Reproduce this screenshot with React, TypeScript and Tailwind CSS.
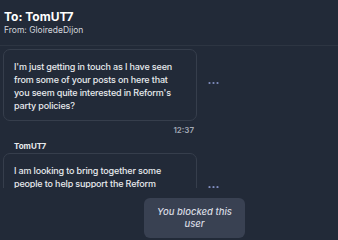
import * as React from "react"

const Dots = () => (
  <svg width="12" height="4" viewBox="0 0 12 4" className="shrink-0">
    <circle cx="1.5" cy="2" r="1.1" fill="#7f8dbf" />
    <circle cx="5.5" cy="2" r="1.1" fill="#7f8dbf" />
    <circle cx="9.5" cy="2" r="1.1" fill="#7f8dbf" />
  </svg>
)

type BubbleProps = {
  text: string
}

function Bubble({ text }: BubbleProps) {
  return (
    <div className="flex items-center">
      <div className="w-[194px] shrink-0 rounded-[7px] border border-[#363e4c] pt-[10px] pr-[18px] pb-[8px] pl-[10px] text-[9px] leading-[13px] font-medium tracking-[-0.15px] text-[#e8eaee]">
        {text}
      </div>
      <div className="mb-[4px] ml-[11px] flex">
        <Dots />
      </div>
    </div>
  )
}

export default function App() {
  return (
    <div className="flex h-[240px] w-[338px] flex-col overflow-hidden bg-[#222a38] font-['Inter','Noto_Sans',sans-serif]">
      <header className="h-[46px] shrink-0 border-b border-[#2d3542] px-[4px] pt-[9px]">
        <div className="text-[12px] leading-[15px] font-bold text-white">
          To: TomUT7
        </div>
        <div className="mt-[1px] text-[8.5px] leading-[10px] text-[#d4d7de]">
          From: GloiredeDijon
        </div>
      </header>

      <div className="h-[142px] shrink-0 overflow-hidden px-[3px] pt-[3px]">
        <Bubble text="I'm just getting in touch as I have seen from some of your posts on here that you seem quite interested in Reform's party policies?" />
        <div className="mt-[4px] w-[194px] pr-[3px] text-right text-[8px] leading-[10px] font-semibold text-[#a3a9b5]">
          12:37
        </div>
        <div className="mt-[6px] pl-[11px] text-[8px] leading-[10px] font-bold text-[#e8eaee]">
          TomUT7
        </div>
        <div className="mt-[2px]">
          <Bubble text="I am looking to bring together some people to help support the Reform party in our local area, would you be interested in joining us?" />
        </div>
      </div>

      <div className="flex-1 pt-[10px] pl-[144px]">
        <div className="flex h-[40px] w-[101px] items-center justify-center rounded-[6px] bg-[#394152] px-[8px] text-center text-[9.5px] leading-[12px] font-medium italic text-[#d8dbe2]">
          You blocked this user
        </div>
      </div>
    </div>
  )
}
